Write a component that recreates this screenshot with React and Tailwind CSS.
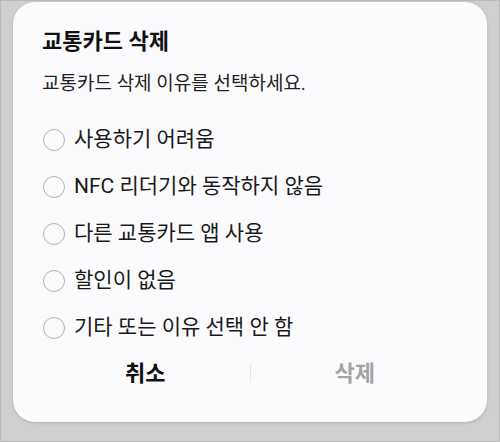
import React from 'react'

const reasons = [
  '사용하기 어려움',
  'NFC 리더기와 동작하지 않음',
  '다른 교통카드 앱 사용',
  '할인이 없음',
  '기타 또는 이유 선택 안 함',
]

export default function App() {
  return (
    <div
      className="w-[500px] h-[442px] bg-[#cfcfcf] border border-[#b9b9b9] pt-[1px] pl-[12px] pr-[12px]"
      style={{ fontFamily: 'Roboto, "Noto Sans CJK KR", sans-serif' }}
    >
      <div className="h-[420px] bg-[#fbfbfd] rounded-[22px] shadow-[0_1px_3px_rgba(0,0,0,0.15)] flex flex-col">
        {/* Header */}
        <div className="pl-[29px] pt-[25px]">
          <h1 className="text-[22px] leading-[30px] font-bold text-[#111]">교통카드 삭제</h1>
          <p className="mt-[13px] text-[19px] leading-[28px] text-[#222]">교통카드 삭제 이유를 선택하세요.</p>
        </div>

        {/* Options */}
        <div className="pl-[30px] mt-[18px] flex flex-col">
          {reasons.map((r) => (
            <div key={r} className="h-[47px] flex items-center gap-[9px]">
              <span className="w-[22px] h-[22px] rounded-full border-[1.5px] border-[#b3b3b3] shrink-0"></span>
              <span className="text-[21px] text-[#1a1a1a]">{r}</span>
            </div>
          ))}
        </div>

        {/* Buttons */}
        <div className="flex items-center h-[50px] -mt-[3px] px-[28px]">
          <button className="flex-1 text-[22px] font-bold text-[#111]">취소</button>
          <span className="w-px h-[18px] bg-[#e6e6e6]"></span>
          <button className="flex-1 text-[22px] font-bold text-[#a3a3a3]">삭제</button>
        </div>
      </div>
    </div>
  )
}
